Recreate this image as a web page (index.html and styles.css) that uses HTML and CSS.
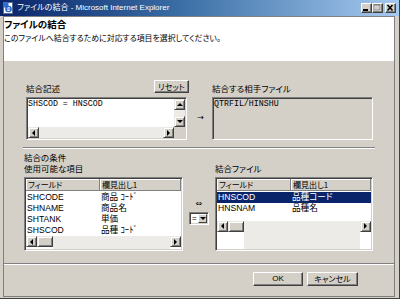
FILE: index.html
```html
<!DOCTYPE html>
<html lang="ja">
<head>
<meta charset="utf-8">
<title>ファイルの結合</title>
<link rel="stylesheet" href="styles.css">
</head>
<body>
<div class="window">
  <div class="titlebar">
    <svg class="ticon" width="12" height="12" viewBox="0 0 12 12">
      <rect x="1.5" y="0.5" width="9" height="11" fill="#fff" stroke="#5a6c96"/>
      <rect x="1.5" y="0.5" width="5" height="5" fill="#2f6fd0"/>
      <circle cx="6.5" cy="7" r="2.6" fill="none" stroke="#1f5fc8" stroke-width="1.4"/>
      <path d="M4 7h5" stroke="#1f5fc8" stroke-width="1"/>
    </svg>
    <span class="ttext">ファイルの結合 - Microsoft Internet Explorer</span>
    <div class="tbtns">
      <span class="tbtn"><svg width="9" height="8" viewBox="0 0 9 8"><rect x="1" y="5" width="5" height="2" fill="#000"/></svg></span>
      <span class="tbtn"><svg width="9" height="8" viewBox="0 0 9 8"><rect x="1.5" y="0.5" width="6" height="6" fill="none" stroke="#fff"/><rect x="1" y="0" width="6" height="6" fill="none" stroke="#808080"/><rect x="1" y="0" width="6" height="1.5" fill="#808080"/></svg></span>
      <span class="tbtn close"><svg width="9" height="8" viewBox="0 0 9 8"><path d="M1.5 1L6.5 6.5M6.5 1L1.5 6.5" stroke="#000" stroke-width="1.6"/></svg></span>
    </div>
  </div>
  <div class="frame">
    <div class="client">
      <div class="header">
        <div class="h-title">ファイルの結合</div>
        <div class="h-sub">このファイルへ結合するために対応する項目を選択してください。</div>
      </div>
      <div class="panel">
        <div class="sec1">
          <div class="col">
            <div class="lblrow">
              <span class="lbl">結合記述</span>
              <span class="btn reset">リセット</span>
            </div>
            <div class="textbox sunken">
              <div class="tb-main">
                <div class="tb-text">SHSCOD = HNSCOD</div>
                <div class="vscroll">
                  <span class="sbtn"><i class="tri up"></i></span>
                  <span class="track"></span>
                  <span class="sbtn"><i class="tri down"></i></span>
                </div>
              </div>
              <div class="tb-bottom">
                <div class="hscroll">
                  <span class="sbtn"><i class="tri left"></i></span>
                  <span class="track"></span>
                  <span class="sbtn"><i class="tri right"></i></span>
                </div>
                <span class="corner"></span>
              </div>
            </div>
          </div>
          <div class="mid1"><span class="arrow">→</span></div>
          <div class="col">
            <div class="lblrow"><span class="lbl">結合する相手ファイル</span></div>
            <div class="targetbox sunken">QTRFIL/HINSHU</div>
          </div>
        </div>

        <div class="sep sep1"></div>

        <div class="sec2">
          <div class="lbl cond">結合の条件</div>
          <div class="grid2">
            <div class="col">
              <div class="lbl line">使用可能な項目</div>
              <div class="list sunken">
                <div class="lhead"><span>フィールド</span><span>欄見出し1</span></div>
                <div class="lbody">
                  <div class="lrow"><span>SHCODE</span><span>商品 ｺｰﾄﾞ</span></div>
                  <div class="lrow"><span>SHNAME</span><span>商品名</span></div>
                  <div class="lrow"><span>SHTANK</span><span>単価</span></div>
                  <div class="lrow"><span>SHSCOD</span><span>品種 ｺｰﾄﾞ</span></div>
                </div>
                <div class="hscroll">
                  <span class="sbtn"><i class="tri left"></i></span>
                  <span class="thumb"></span>
                  <span class="track"></span>
                  <span class="sbtn"><i class="tri right"></i></span>
                </div>
              </div>
            </div>
            <div class="mid2">
              <span class="dbl">⇔</span>
              <div class="select sunken">
                <span class="sel-val">=</span>
                <span class="sel-btn"><i class="tri down"></i></span>
              </div>
            </div>
            <div class="col">
              <div class="lbl line">結合ファイル</div>
              <div class="list sunken">
                <div class="lhead"><span>フィールド</span><span>欄見出し1</span></div>
                <div class="lbody">
                  <div class="lrow sel"><span>HNSCOD</span><span>品種コード</span></div>
                  <div class="lrow"><span>HNSNAM</span><span>品種名</span></div>
                </div>
                <div class="hscroll">
                  <span class="sbtn"><i class="tri left"></i></span>
                  <span class="thumb"></span>
                  <span class="track"></span>
                  <span class="sbtn"><i class="tri right"></i></span>
                </div>
              </div>
            </div>
          </div>
        </div>

        <div class="sep sep2"></div>

        <div class="actions">
          <span class="btn ok">OK</span>
          <span class="btn cancel">キャンセル</span>
        </div>
      </div>
    </div>
  </div>
</div>
</body>
</html>
```

FILE: styles.css
```css
* { box-sizing: border-box; }
html, body { margin: 0; padding: 0; }
body {
  width: 400px;
  height: 299px;
  overflow: hidden;
  background: #d4d0c8;
  font-family: "Noto Sans CJK JP", sans-serif;
  font-feature-settings: "palt";
  color: #000;
}
.window {
  width: 400px;
  height: 299px;
  display: flex;
  flex-direction: column;
  background: #d4d0c8;
  border-right: 1px solid #404040;
  border-bottom: 1px solid #404040;
}

/* title bar */
.titlebar {
  height: 16px;
  flex: none;
  display: flex;
  align-items: center;
  padding: 0 3px 0 2px;
  background: linear-gradient(to right, #0a246a 0%, #3a6ea5 45%, #a6caf0 100%);
}
.ticon { flex: none; }
.ttext {
  margin-left: 3px;
  color: #fff;
  font-family: "Liberation Sans", "Noto Sans CJK JP", sans-serif;
  font-size: 8px;
  line-height: 12px;
  white-space: nowrap;
}
.tbtns { margin-left: auto; display: flex; }
.tbtn {
  width: 11px;
  height: 10px;
  display: flex;
  align-items: center;
  justify-content: center;
  background: #d4d0c8;
  border: 1px solid;
  border-color: #fff #404040 #404040 #fff;
  box-shadow: inset -1px -1px #808080;
}
.tbtn.close { margin-left: 2px; }

/* frame and client */
.frame {
  flex: 1;
  display: flex;
  padding: 0 4px 1px 3px;
}
.client {
  flex: 1;
  display: flex;
  flex-direction: column;
  border: 1px solid #808080;
  background: #d4d0c8;
}
.header {
  height: 44px;
  flex: none;
  background: #fff;
  padding: 1px 0 0 0;
}
.h-title {
  font-size: 9.5px;
  font-weight: bold;
  line-height: 12px;
}
.h-sub {
  margin-top: 2px;
  font-size: 7.9px;
  line-height: 11px;
  white-space: nowrap;
}
.panel {
  flex: 1;
  display: flex;
  flex-direction: column;
}

/* common widgets */
.lbl {
  font-size: 8.5px;
  line-height: 10px;
  white-space: nowrap;
}
.sunken {
  border: 1px solid;
  border-color: #808080 #fff #fff #808080;
  box-shadow: inset 1px 1px #404040, inset -1px -1px #d4d0c8;
  padding: 1px;
}
.btn {
  display: flex;
  align-items: center;
  justify-content: center;
  background: #d4d0c8;
  border: 1px solid;
  border-color: #fff #404040 #404040 #fff;
  box-shadow: inset -1px -1px #808080;
  font-size: 8px;
  line-height: 10px;
  white-space: nowrap;
}
.sbtn {
  width: 11px;
  height: 11px;
  flex: none;
  display: flex;
  align-items: center;
  justify-content: center;
  background: #d4d0c8;
  border: 1px solid;
  border-color: #eae8e3 #404040 #404040 #eae8e3;
  box-shadow: inset 1px 1px #fff, inset -1px -1px #808080;
}
.thumb {
  width: 16px;
  height: 11px;
  flex: none;
  background: #d4d0c8;
  border: 1px solid;
  border-color: #eae8e3 #404040 #404040 #eae8e3;
  box-shadow: inset 1px 1px #fff, inset -1px -1px #808080;
}
.track { flex: 1; background: #ecebe7; }
.tri { display: block; width: 0; height: 0; }
.tri.up { border-left: 3px solid transparent; border-right: 3px solid transparent; border-bottom: 3px solid #000; }
.tri.down { border-left: 3px solid transparent; border-right: 3px solid transparent; border-top: 3px solid #000; }
.tri.left { border-top: 3px solid transparent; border-bottom: 3px solid transparent; border-right: 3px solid #000; }
.tri.right { border-top: 3px solid transparent; border-bottom: 3px solid transparent; border-left: 3px solid #000; }
.sep {
  height: 2px;
  flex: none;
  border-top: 1px solid #808080;
  border-bottom: 1px solid #fff;
}

/* section 1 */
.sec1 {
  display: grid;
  grid-template-columns: 163px 23px 161px;
  padding: 19px 0 0 22px;
}
.lblrow {
  height: 13px;
  display: flex;
  justify-content: space-between;
  align-items: flex-end;
}
.reset { width: 35px; height: 13px; }
.textbox {
  margin-top: 4px;
  width: 161px;
  height: 43px;
  background: #fff;
  display: flex;
  flex-direction: column;
}
.tb-main { flex: 1; display: flex; }
.tb-text {
  flex: 1;
  font-family: "Liberation Mono", monospace;
  font-size: 8.3px;
  line-height: 10px;
  white-space: pre;
}
.vscroll { width: 11px; display: flex; flex-direction: column; }
.tb-bottom { height: 11px; display: flex; }
.hscroll { flex: 1; height: 11px; display: flex; }
.corner { width: 11px; height: 11px; background: #d4d0c8; }
.mid1 {
  display: flex;
  align-items: center;
  justify-content: center;
  padding-top: 16px;
}
.arrow { font-family: "DejaVu Sans", sans-serif; font-size: 8px; line-height: 10px; }
.targetbox {
  margin-top: 4px;
  height: 43px;
  width: 161px;
  background: #d4d0c8;
  font-family: "Liberation Mono", monospace;
  font-size: 8.3px;
  line-height: 10px;
}

.sep1 { margin: 7px 0 0 19px; width: 352px; }

/* section 2 */
.sec2 { padding-left: 20px; }
.cond { margin-top: 3px; line-height: 11px; }
.grid2 {
  display: grid;
  grid-template-columns: 159px 32px 158px;
}
.line { line-height: 11px; }
.list {
  margin-top: 3px;
  height: 74px;
  background: #fff;
  display: flex;
  flex-direction: column;
}
.lhead {
  height: 12px;
  flex: none;
  display: grid;
  grid-template-columns: 74px 1fr;
}
.lhead span {
  background: #d4d0c8;
  border-right: 1px solid #808080;
  border-bottom: 1px solid #808080;
  box-shadow: inset 1px 1px #fff;
  font-size: 8px;
  line-height: 11px;
  padding-left: 2px;
  white-space: nowrap;
  overflow: hidden;
}
.lbody { flex: 1; padding-top: 1px; }
.lrow {
  height: 11px;
  display: grid;
  grid-template-columns: 74px 1fr;
  font-family: "Liberation Sans", "Noto Sans CJK JP", sans-serif;
  font-size: 8.6px;
  line-height: 11px;
  white-space: nowrap;
}
.lrow span { padding-left: 1px; }
.lrow.sel { background: #0a246a; color: #fff; }
.mid2 {
  display: flex;
  flex-direction: column;
  align-items: center;
  padding-top: 36px;
}
.dbl { font-family: "DejaVu Sans", sans-serif; font-size: 8px; line-height: 10px; }
.select {
  margin-top: 3px;
  width: 20px;
  height: 13px;
  background: #fff;
  display: flex;
}
.sel-val {
  flex: 1;
  font-family: "Liberation Sans", sans-serif;
  font-size: 8px;
  line-height: 9px;
  padding-left: 1px;
}
.sel-btn {
  width: 9px;
  display: flex;
  align-items: center;
  justify-content: center;
  background: #d4d0c8;
  border: 1px solid;
  border-color: #fff #404040 #404040 #fff;
}

.sep2 { margin-top: 12px; }

.actions {
  margin-top: 7px;
  display: flex;
  justify-content: flex-end;
  gap: 4px;
  padding-right: 36px;
}
.ok { width: 50px; height: 14px; font-family: "Liberation Sans", sans-serif; }
.cancel { width: 51px; height: 14px; }
```
